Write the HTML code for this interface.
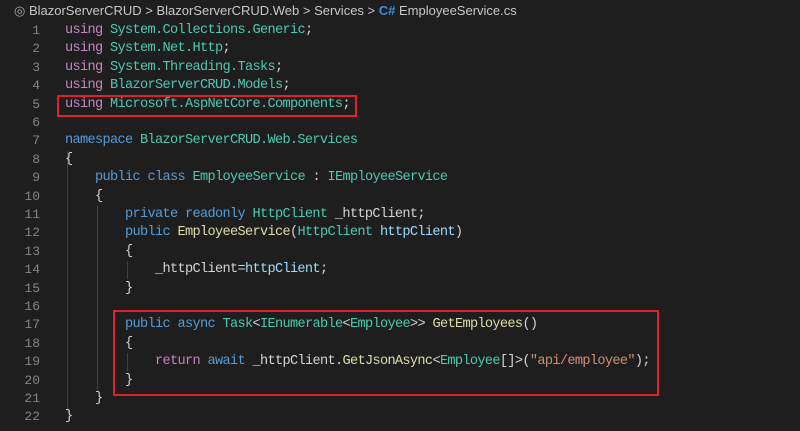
<!DOCTYPE html><html><head><style>
body{margin:0;width:800px;height:431px;background:#1e1e1e;overflow:hidden;position:relative;font-family:"Liberation Mono",monospace;}
.bc{position:absolute;top:3px;left:14px;font:13px "Liberation Sans",sans-serif;color:#c8c8c8;white-space:pre;}
.l{position:absolute;left:0;height:18.4px;line-height:18.4px;font-size:13.6px;letter-spacing:-0.66px;white-space:pre;color:#d4d4d4;}
.n{position:absolute;width:40px;text-align:right;color:#858585;letter-spacing:0;font-size:13px;}
.c{position:absolute;left:65px;}
.u{color:#c586c0}.t{color:#4ec9b0}.k{color:#569cd6}.m{color:#dcdcaa}.v{color:#9cdcfe}.s{color:#ce9178}
.box{position:absolute;border:2px solid #e0202a;}
.g{position:absolute;width:1px;background:#404040;}
</style></head><body>
<div class="bc"><span style="color:#aaa">◎</span> BlazorServerCRUD &gt; BlazorServerCRUD.Web &gt; Services &gt; <b style="color:#3c8ee0">C#</b> EmployeeService.cs</div>
<div class="g" style="left:67px;top:151px;height:262px"></div>
<div class="g" style="left:97px;top:206px;height:184px"></div>
<div class="g" style="left:127px;top:261px;height:18px"></div>
<div class="g" style="left:127px;top:353px;height:18px"></div>
<div class="l" style="top:22px"><span class="n">1</span><span class="c"><span class="u">using</span> <span class="t">System.Collections.Generic</span>;</span></div>
<div class="l" style="top:40.4px"><span class="n">2</span><span class="c"><span class="u">using</span> <span class="t">System.Net.Http</span>;</span></div>
<div class="l" style="top:58.8px"><span class="n">3</span><span class="c"><span class="u">using</span> <span class="t">System.Threading.Tasks</span>;</span></div>
<div class="l" style="top:77.2px"><span class="n">4</span><span class="c"><span class="u">using</span> <span class="t">BlazorServerCRUD.Models</span>;</span></div>
<div class="l" style="top:95.6px"><span class="n">5</span><span class="c"><span class="u">using</span> <span class="t">Microsoft.AspNetCore.Components</span>;</span></div>
<div class="l" style="top:114px"><span class="n">6</span></div>
<div class="l" style="top:132.4px"><span class="n">7</span><span class="c"><span class="k">namespace</span> <span class="t">BlazorServerCRUD.Web.Services</span></span></div>
<div class="l" style="top:150.8px"><span class="n">8</span><span class="c">{</span></div>
<div class="l" style="top:169.2px"><span class="n">9</span><span class="c">    <span class="k">public</span> <span class="k">class</span> <span class="t">EmployeeService</span> : <span class="t">IEmployeeService</span></span></div>
<div class="l" style="top:187.6px"><span class="n">10</span><span class="c">    {</span></div>
<div class="l" style="top:206px"><span class="n">11</span><span class="c">        <span class="k">private</span> <span class="k">readonly</span> <span class="t">HttpClient</span> _httpClient;</span></div>
<div class="l" style="top:224.4px"><span class="n">12</span><span class="c">        <span class="k">public</span> <span class="m">EmployeeService</span>(<span class="t">HttpClient</span> <span class="v">httpClient</span>)</span></div>
<div class="l" style="top:242.8px"><span class="n">13</span><span class="c">        {</span></div>
<div class="l" style="top:261.2px"><span class="n">14</span><span class="c">            _httpClient=<span class="v">httpClient</span>;</span></div>
<div class="l" style="top:279.6px"><span class="n">15</span><span class="c">        }</span></div>
<div class="l" style="top:298px"><span class="n">16</span></div>
<div class="l" style="top:316.4px"><span class="n">17</span><span class="c">        <span class="k">public</span> <span class="k">async</span> <span class="t">Task</span>&lt;<span class="t">IEnumerable</span>&lt;<span class="t">Employee</span>&gt;&gt; <span class="m">GetEmployees</span>()</span></div>
<div class="l" style="top:334.8px"><span class="n">18</span><span class="c">        {</span></div>
<div class="l" style="top:353.2px"><span class="n">19</span><span class="c">            <span class="u">return</span> <span class="k">await</span> _httpClient.<span class="m">GetJsonAsync</span>&lt;<span class="t">Employee</span>[]&gt;(<span class="s">"api/employee"</span>);</span></div>
<div class="l" style="top:371.6px"><span class="n">20</span><span class="c">        }</span></div>
<div class="l" style="top:390px"><span class="n">21</span><span class="c">    }</span></div>
<div class="l" style="top:408.4px"><span class="n">22</span><span class="c">}</span></div>
<div class="box" style="left:57px;top:95px;width:296px;height:18px"></div>
<div class="box" style="left:113px;top:310px;width:542px;height:82px"></div>
</body></html>
